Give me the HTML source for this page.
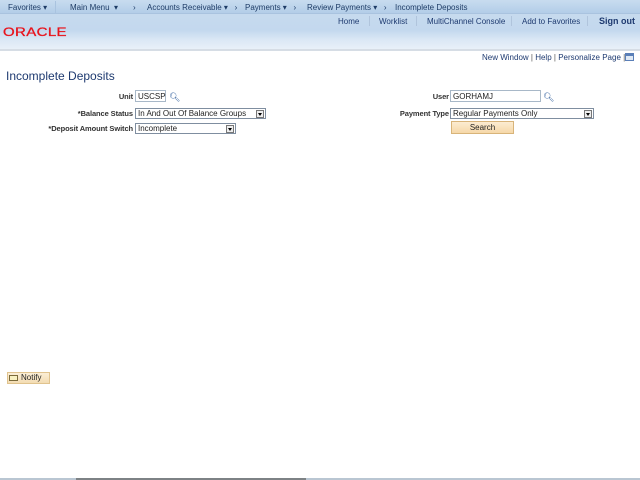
<!DOCTYPE html>
<html><head><style>
*{margin:0;padding:0;box-sizing:border-box}
body{width:640px;height:480px;background:#fff;font-family:"Liberation Sans",Arial,sans-serif;font-size:8px;color:#000;position:relative;overflow:hidden}
.a{position:absolute;white-space:nowrap}
#top{position:absolute;left:0;top:0;width:640px;height:51px;background:linear-gradient(#b7d0e9 0px,#c6daee 15px,#c3d8ee 30px,#dbe8f5 40px,#eaf1f9 50px);border-bottom:2px solid #d6dde5}
#bc{position:absolute;left:0;top:0;width:640px;height:14px;background:linear-gradient(#c8dcef,#b3cde8);border-bottom:1px solid #a9c3df}
.bc{color:#1e3c66;font-size:8px;top:3px}
.nav{color:#1e3a70;font-size:8px;top:17px}
.sep{top:16px;width:1px;height:10px;background:#b0c4dc}
.lbl{font-weight:bold;color:#333;font-size:7.5px;text-align:right;letter-spacing:-0.1px}
.inp{border:1px solid #a8b8c8;background:#fff;height:12px;font-size:8px;padding:1px 2px;color:#222}
.sel{border:1px solid #7f8ea0;background:#fff;height:11px;font-size:8px;padding:0 2px;color:#222}
.dd{position:absolute;right:1px;top:1px;width:8px;height:8px;border:1px solid #777;background:#eee}
.dd:after{content:"";position:absolute;left:1px;top:2px;border:2px solid transparent;border-top:3px solid #000}
.lk{color:#1e3a70;font-size:8px}
</style></head><body>
<div id="top"></div>
<div id="bc"></div>
<div class="a" style="left:55px;top:1px;width:1px;height:13px;background:#a9c3df"></div>
<div class="a bc" style="left:8px">Favorites ▾</div>
<div class="a bc" style="left:70px">Main Menu&nbsp; ▾</div>
<div class="a bc" style="left:133px">›</div>
<div class="a bc" style="left:147px">Accounts Receivable ▾&nbsp;&nbsp; ›</div>
<div class="a bc" style="left:245px">Payments ▾&nbsp;&nbsp; ›</div>
<div class="a bc" style="left:307px">Review Payments ▾&nbsp;&nbsp; ›</div>
<div class="a bc" style="left:395px">Incomplete Deposits</div>
<div class="a" style="left:3px;top:25px;color:#e8141d;font-size:12px;letter-spacing:0.3px;transform:scaleX(1.25);transform-origin:left;-webkit-text-stroke:0.3px #e8141d">ORACLE</div>
<div class="a nav" style="left:338px">Home</div>
<div class="a sep" style="left:369px"></div>
<div class="a nav" style="left:379px">Worklist</div>
<div class="a sep" style="left:416px"></div>
<div class="a nav" style="left:427px">MultiChannel Console</div>
<div class="a sep" style="left:511px"></div>
<div class="a nav" style="left:522px">Add to Favorites</div>
<div class="a sep" style="left:587px"></div>
<div class="a nav" style="left:599px;font-weight:bold;font-size:9px;top:16px">Sign out</div>
<div class="a lk" style="left:482px;top:53px">New Window <span style="color:#555">|</span> Help <span style="color:#555">|</span> Personalize Page <span style="color:#555">|</span></div>
<div class="a" style="left:625px;top:53px;width:9px;height:8px;border:1px solid #5a7fb8;background:linear-gradient(#5a7fb8 2px,#dfe9f5 2px)"></div>
<div class="a" style="left:6px;top:69px;font-size:12px;color:#1e3a70">Incomplete Deposits</div>

<div class="a lbl" style="left:0;width:133px;top:92px">Unit</div>
<div class="a inp" style="left:135px;top:90px;width:31px">USCSP</div>
<div class="a" style="left:169px;top:92px;color:#2a5a9a;font-size:9px">&#x1F50D;&#xFE0E;</div>
<div class="a lbl" style="left:0;width:133px;top:109px">*Balance Status</div>
<div class="a sel" style="left:135px;top:108px;width:131px">In And Out Of Balance Groups<span class="dd"></span></div>
<div class="a lbl" style="left:0;width:133px;top:124px">*Deposit Amount Switch</div>
<div class="a sel" style="left:135px;top:123px;width:101px">Incomplete<span class="dd"></span></div>

<div class="a lbl" style="left:300px;width:149px;top:92px">User</div>
<div class="a inp" style="left:450px;top:90px;width:91px">GORHAMJ</div>
<div class="a" style="left:543px;top:92px;color:#2a5a9a;font-size:9px">&#x1F50D;&#xFE0E;</div>
<div class="a lbl" style="left:300px;width:149px;top:109px">Payment Type</div>
<div class="a sel" style="left:450px;top:108px;width:144px">Regular Payments Only<span class="dd"></span></div>
<div class="a" style="left:451px;top:121px;width:63px;height:13px;border:1px solid #d8b47a;background:linear-gradient(#fcecd2,#f6d8a8);text-align:center;font-size:8px;line-height:11px;color:#222">Search</div>

<div class="a" style="left:7px;top:372px;width:43px;height:12px;border:1px solid #e0c38e;background:linear-gradient(#fbeed6,#f3dcb2);font-size:8px;line-height:10px;padding-left:13px;color:#222">Notify</div>
<div class="a" style="left:9px;top:375px;width:9px;height:6px;border:1px solid #7a6a3a;background:#f8f0c0"></div>

<div class="a" style="left:0;top:478px;width:640px;height:2px;background:#b9c6d2"></div>
<div class="a" style="left:76px;top:478px;width:230px;height:2px;background:#7d8285"></div>
</body></html>
